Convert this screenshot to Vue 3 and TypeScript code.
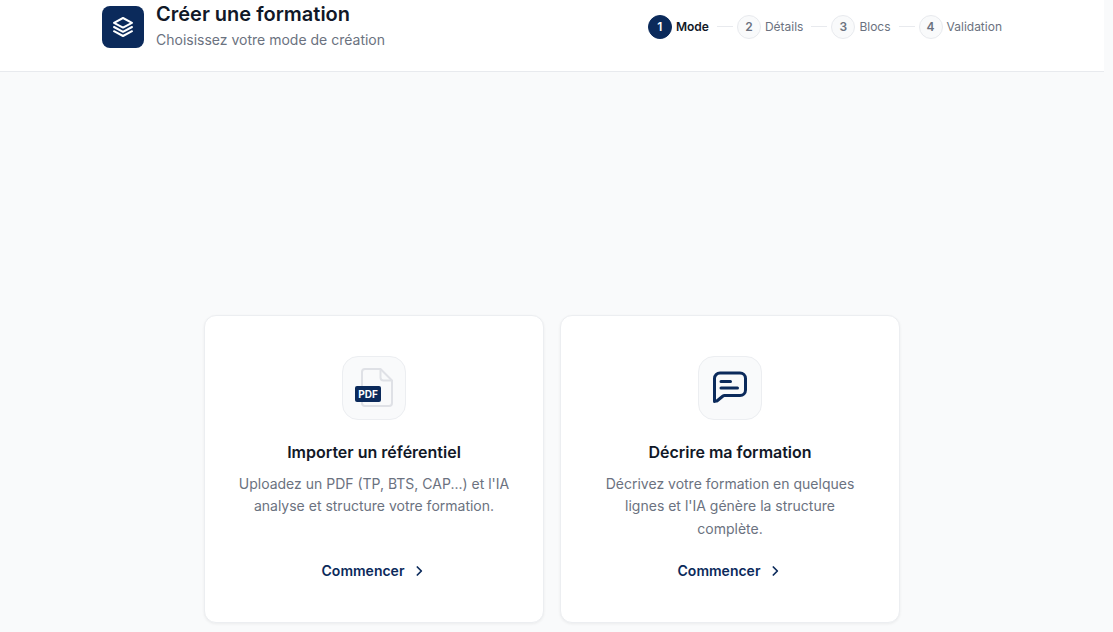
<script setup lang="ts">
interface Step { n: number; label: string; active?: boolean }
const steps: Step[] = [
  { n: 1, label: 'Mode', active: true },
  { n: 2, label: 'Détails' },
  { n: 3, label: 'Blocs' },
  { n: 4, label: 'Validation' },
]
</script>

<template>
  <div class="page">
    <header class="header">
      <div class="header-inner">
        <div class="brand">
          <div class="logo">
            <svg width="24" height="24" viewBox="0 0 24 24" fill="none" stroke="#fff" stroke-width="2" stroke-linecap="round" stroke-linejoin="round">
              <path d="M12 3 3 7.8l9 4.8 9-4.8L12 3Z" />
              <path d="m3 12 9 4.8 9-4.8" />
              <path d="m3 16.2 9 4.8 9-4.8" />
            </svg>
          </div>
          <div class="titles">
            <h1>Créer une formation</h1>
            <p>Choisissez votre mode de création</p>
          </div>
        </div>
        <nav class="steps">
          <template v-for="(s, i) in steps" :key="s.n">
            <span v-if="i > 0" class="line"></span>
            <div class="step" :class="{ active: s.active }">
              <span class="dot">{{ s.n }}</span>
              <span class="label">{{ s.label }}</span>
            </div>
          </template>
        </nav>
      </div>
    </header>
    <main class="main">
      <div class="cards">
        <article class="card">
          <div class="icon">
            <svg class="file" width="40" height="40" viewBox="0 0 40 40" fill="none" stroke="#dfe1e6" stroke-width="2" stroke-linejoin="round">
              <path d="M8 4a3 3 0 0 1 3-3h15.500L38 12.500V35a3 3 0 0 1-3 3H11a3 3 0 0 1-3-3V4Z" />
              <path d="M26.500 1v8.500a3 3 0 0 0 3 3H38" />
            </svg>
            <span class="pdf">PDF</span>
          </div>
          <h2>Importer un référentiel</h2>
          <p class="desc">Uploadez un PDF (TP, BTS, CAP...) et l'IA analyse et structure votre formation.</p>
          <div class="cta">
            <span>Commencer</span>
            <svg width="16" height="16" viewBox="0 0 24 24" fill="none" stroke="#0b2a5b" stroke-width="2.600" stroke-linecap="round" stroke-linejoin="round"><path d="m11 6 6 6-6 6" /></svg>
          </div>
        </article>
        <article class="card">
          <div class="icon">
            <svg width="40" height="40" viewBox="0 0 40 40" fill="none" stroke="#0b2a5b" stroke-width="3" stroke-linecap="round" stroke-linejoin="round">
              <path d="M4.500 33.500V10.500a5.500 5.500 0 0 1 5.500-5.500h20a5.500 5.500 0 0 1 5.500 5.500v11.500a5.500 5.500 0 0 1-5.500 5.500H14.500a2.500 2.500 0 0 0-1.500.5l-5.500 4.500c-1.200 1-3 .6-3-.5Z" />
              <path d="M11 13.500h9.500M11 20h16.500" />
            </svg>
          </div>
          <h2>Décrire ma formation</h2>
          <p class="desc">Décrivez votre formation en quelques lignes et l'IA génère la structure complète.</p>
          <div class="cta">
            <span>Commencer</span>
            <svg width="16" height="16" viewBox="0 0 24 24" fill="none" stroke="#0b2a5b" stroke-width="2.600" stroke-linecap="round" stroke-linejoin="round"><path d="m11 6 6 6-6 6" /></svg>
          </div>
        </article>
      </div>
    </main>
  </div>
</template>

<style>
html, body { margin: 0; overflow: hidden; background: #f9fafb; }
</style>

<style scoped>
.page {
  width: 1104px;
  height: 632px;
  overflow: hidden;
  font-family: Inter, "Liberation Sans", sans-serif;
  background: #f9fafb;
  display: flex;
  flex-direction: column;
}
.header {
  height: 71px;
  width: 1113px;
  background: #fff;
  border-bottom: 1px solid #e8eaee;
  flex: none;
}
.header-inner {
  width: 900px;
  margin-left: 102px;
  display: flex;
  justify-content: space-between;
}
.brand { display: flex; gap: 12px; padding-top: 6px; }
.logo {
  width: 42px;
  height: 42px;
  border-radius: 8px;
  background: #0b2a5b;
  display: flex;
  align-items: center;
  justify-content: center;
}
.titles h1 {
  margin: -6px 0 0;
  font-size: 20px;
  line-height: 28px;
  font-weight: 600;
  color: #111827;
}
.titles p {
  margin: 2px 0 0;
  font-size: 14px;
  line-height: 20px;
  color: #6b7280;
}
.steps { display: flex; align-items: center; height: 53px; }
.step { display: flex; align-items: center; gap: 4px; }
.dot {
  width: 24px;
  height: 24px;
  border-radius: 50%;
  box-sizing: border-box;
  border: 1px solid #e8eaee;
  background: #f9fafb;
  color: #6b7280;
  font-size: 12px;
  font-weight: 600;
  display: flex;
  align-items: center;
  justify-content: center;
}
.label { font-size: 12px; color: #6b7280; }
.active .dot { background: #0b2a5b; border-color: #0b2a5b; color: #fff; }
.active .label { color: #111827; font-weight: 600; }
.line { width: 16px; height: 1px; background: #e8eaee; margin: 0 4px 0 8px; }
.main {
  flex: 1;
  display: flex;
  justify-content: center;
  padding-top: 243px;
}
.cards { display: grid; grid-template-columns: 340px 340px; gap: 16px; width: 696px; height: 308px; }
.card {
  box-sizing: border-box;
  background: #fff;
  border: 1px solid #eceef1;
  border-radius: 12px;
  box-shadow: 0 1px 3px rgba(0, 0, 0, 0.06);
  padding: 40px 32px 0;
  display: flex;
  flex-direction: column;
  align-items: center;
  text-align: center;
}
.icon {
  position: relative;
  width: 64px;
  height: 64px;
  box-sizing: border-box;
  border: 1px solid #eceef1;
  border-radius: 16px;
  background: #f9fafb;
  display: flex;
  align-items: center;
  justify-content: center;
  flex: none;
}
.pdf {
  position: absolute;
  left: 12px;
  top: 29px;
  width: 26px;
  height: 16px;
  border-radius: 2px;
  background: #0b2a5b;
  color: #fff;
  font-size: 10px;
  font-weight: 700;
  line-height: 16px;
  text-align: center;
}
h2 {
  margin: 20px 0 0;
  font-size: 16px;
  line-height: 24px;
  font-weight: 600;
  color: #111827;
}
.desc {
  margin: 8.500px 0 0;
  font-size: 14px;
  line-height: 22.750px;
  color: #6b7280;
  height: 68px;
}
.cta {
  margin-top: 20.500px;
  display: flex;
  align-items: center;
  gap: 6px;
  font-size: 14px;
  line-height: 20px;
  font-weight: 600;
  color: #0b2a5b;
}
</style>
